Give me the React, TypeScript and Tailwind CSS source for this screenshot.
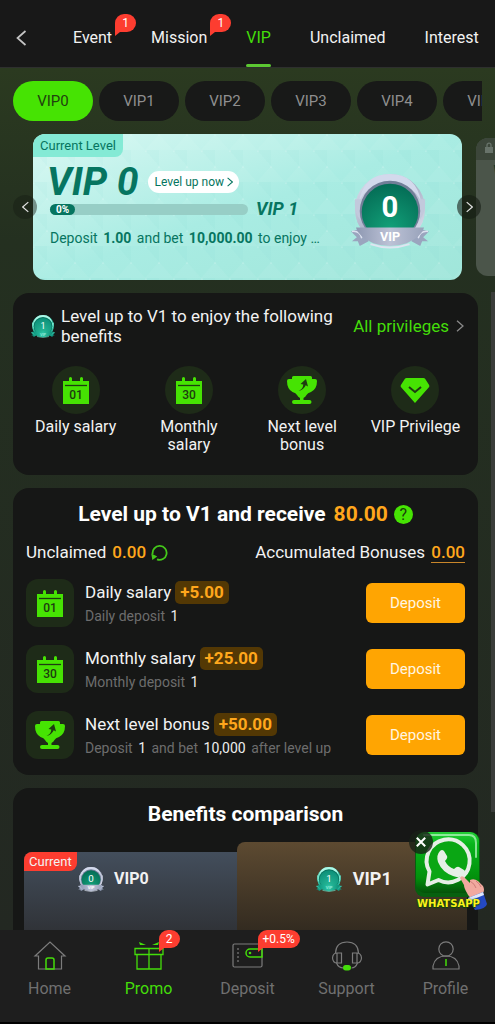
import React, { useState } from 'react';

const tabs = [
  { label: 'Event', badge: '1' },
  { label: 'Mission', badge: '1' },
  { label: 'VIP' },
  { label: 'Unclaimed' },
  { label: 'Interest' },
];

const levels = ['VIP0', 'VIP1', 'VIP2', 'VIP3', 'VIP4', 'VIP5'];

const App: React.FC = () => {
  const [activeTab, setActiveTab] = useState('VIP');
  const [level, setLevel] = useState('VIP0');
  const [showChat, setShowChat] = useState(true);

  return (
    <div className="relative h-screen flex flex-col overflow-hidden bg-[#232822] font-['Roboto',sans-serif] text-[#f2f2f2]">
      {/* Top tabs */}
      <header className="h-[68px] shrink-0 flex bg-[#181818] border-b border-[#2e2f2e]">
        <button aria-label="Back" className="w-[73px] shrink-0 pl-4 pt-2">
          <Chevron className="w-[11px] h-4 text-[#c4c4c4] rotate-180" />
        </button>
        <nav className="flex gap-[39px]">
          {tabs.map(tab => (
            <button
              key={tab.label}
              onClick={() => setActiveTab(tab.label)}
              className={`relative pt-2 text-base ${activeTab === tab.label ? 'text-[#44dd0a]' : ''}`}
            >
              {tab.label}
              {tab.badge && <Bubble className="absolute top-[14px] left-full ml-[3px]">{tab.badge}</Bubble>}
              {activeTab === tab.label && <span className="absolute left-0 bottom-0 h-[3px] w-full rounded-full bg-[#5cc832]" />}
            </button>
          ))}
        </nav>
      </header>

      <main className="flex-1 min-h-0 overflow-y-auto [scrollbar-width:none]">
        <div className="flex flex-col gap-[13px] pt-[13px] bg-linear-to-b from-[#2b3a20] from-0% via-[#243020] via-20% to-[#232822]">
          {/* Level chips */}
          <div className="mx-[13px] flex gap-[6px] overflow-hidden">
            {levels.map(item => (
              <button
                key={item}
                onClick={() => setLevel(item)}
                className={`w-20 h-10 shrink-0 rounded-full text-[15px] ${level === item ? 'bg-[#46e303] text-[#21420f]' : 'bg-[#181918] text-[#8f8f8f]'}`}
              >
                {item}
              </button>
            ))}
          </div>

          <LevelCarousel />

          {/* Benefits */}
          <section className="ml-[13px] mr-[17px] rounded-2xl bg-[#161716] px-[6px] pt-[13px] pb-[21px]">
            <div className="flex items-center pl-[12px] pr-2">
              <Medal value="1" teal className="w-6 h-6 shrink-0" />
              <h2 className="flex-1 ml-[6px] text-[17px] leading-5">Level up to V1 to enjoy the following benefits</h2>
              <a href="#privileges" className="flex items-center gap-[7px] text-[17px] leading-5 text-[#44dd0a]">
                All privileges
                <Chevron className="w-2 h-3 text-[#8a8a8a]" />
              </a>
            </div>
            <ul className="mt-5 grid grid-cols-4">
              <Benefit label="Daily salary"><CalendarIcon day="01" /></Benefit>
              <Benefit label="Monthly salary"><CalendarIcon day="30" /></Benefit>
              <Benefit label="Next level bonus"><TrophyIcon /></Benefit>
              <Benefit label="VIP Privilege"><DiamondIcon /></Benefit>
            </ul>
          </section>

          {/* Rewards */}
          <section className="ml-[13px] mr-[17px] rounded-2xl bg-[#161716] px-[13px] pt-[14px] pb-4">
            <h2 className="flex items-center justify-center text-[21px] leading-6 font-bold text-white">
              Level up to V1 and receive
              <span className="ml-2 text-[#ffa71c]">80.00</span>
              <button aria-label="Help" className="ml-[6px] w-[19px] h-[19px] rounded-full bg-[#46e303] text-[#1a3d0a] text-base leading-[19px] font-normal">?</button>
            </h2>
            <div className="mt-4 flex items-start justify-between text-[17px] leading-5">
              <p className="flex items-center">
                Unclaimed <span className="ml-[6px] font-medium text-[#ffa71c]">0.00</span>
                <button aria-label="Refresh" className="ml-[5px]"><RefreshIcon /></button>
              </p>
              <p>
                Accumulated Bonuses <a href="#bonuses" className="ml-[2px] inline-block border-b font-medium border-[#c8862a] text-[#ffa71c]">0.00</a>
              </p>
            </div>
            <div className="mt-4 flex flex-col gap-[18px]">
              <Reward title="Daily salary" amount="+5.00" icon={<CalendarIcon day="01" />}>
                Daily deposit <b className="mx-[2px] font-normal text-[#ededed]">1</b>
              </Reward>
              <Reward title="Monthly salary" amount="+25.00" icon={<CalendarIcon day="30" />}>
                Monthly deposit <b className="mx-[2px] font-normal text-[#ededed]">1</b>
              </Reward>
              <Reward title="Next level bonus" amount="+50.00" icon={<TrophyIcon />}>
                Deposit <b className="mx-[2px] font-normal text-[#ededed]">1</b> and bet <b className="mx-[2px] font-normal text-[#ededed]">10,000</b> after level up
              </Reward>
            </div>
          </section>

          {/* Comparison */}
          <section className="ml-[13px] mr-[17px] rounded-t-2xl bg-[#161716] px-[11px] pt-[14px]">
            <h2 className="text-center text-[21px] leading-6 font-bold text-white">Benefits comparison</h2>
            <div className="mt-4 flex items-end">
              <div className="relative w-[48%] h-[78px] pt-[14px] rounded-tl-lg bg-linear-to-b from-[#434e5c] to-[#303338]">
                <span className="absolute top-0 left-0 h-[19px] px-[5px] rounded-tl-lg rounded-br-lg bg-[#fd3d30] text-[13px] leading-[19px]">Current</span>
                <div className="flex items-center justify-center gap-[10px] pr-[34px] text-base leading-6 font-bold">
                  <Medal value="0" className="w-[26px] h-[26px]" />
                  VIP0
                </div>
              </div>
              <div className="w-[52%] h-[88px] pt-6 pl-1 rounded-t-lg bg-linear-to-b from-[#5d4a31] to-[#332b20]">
                <div className="flex items-center justify-center gap-[11px] text-lg leading-6 font-bold">
                  <Medal value="1" teal className="w-[26px] h-[26px]" />
                  VIP1
                </div>
              </div>
            </div>
          </section>
        </div>
      </main>

      {/* scroll thumb */}
      <span className="absolute right-0 top-[292px] bottom-[212px] w-1 bg-[#3a3d3a]" />

      {showChat && (
        <div className="absolute right-2 bottom-[112px] w-[76px] h-[80px]">
          <a href="#whatsapp" aria-label="WhatsApp" className="block">
            <WhatsAppArt />
            <span className="absolute left-[6px] top-[66px] z-10 font-['DejaVu_Sans',sans-serif] text-[10px] leading-3 font-bold text-[#fdf21c] [text-shadow:0_0_2px_#0a5a08,0_1px_1px_#063d05]">WHATSAPP</span>
          </a>
          <button onClick={() => setShowChat(false)} aria-label="Close" className="absolute -left-[2px] -top-[2px] w-6 h-6 rounded-full bg-[#182016]/80 flex items-center justify-center">
            <svg viewBox="0 0 10 10" className="w-[10px] h-[10px]" stroke="#fff" strokeWidth="2">
              <path d="M0.8 0.8l8.4 8.4M9.2 0.8L0.8 9.2" />
            </svg>
          </button>
        </div>
      )}

      {/* Bottom bar */}
      <nav className="h-[94px] shrink-0 grid grid-cols-5 bg-[#1e1e1e] border-b-2 border-black text-[#707070]">
        <NavItem label="Home"><HomeIcon /></NavItem>
        <NavItem label="Promo" badge="2" active><GiftIcon /></NavItem>
        <NavItem label="Deposit" badge="+0.5%"><WalletIcon /></NavItem>
        <NavItem label="Support"><HeadsetIcon /></NavItem>
        <NavItem label="Profile"><ProfileIcon /></NavItem>
      </nav>
    </div>
  );
};

const LevelCarousel: React.FC = () => (
  <div className="relative">
    <div className="flex items-center gap-[14px] pl-[33px] overflow-hidden">
      <div className="relative w-[calc(100%-33px)] h-[146px] shrink-0 overflow-hidden rounded-xl bg-linear-to-br from-[#d9f8f3] via-[#a9ece3] to-[#a0e6da] text-[#067560]">
        <CardPattern />
        <span className="absolute left-0 top-0 h-[23px] px-[7px] rounded-br-lg bg-[#84ead5] text-[13px] leading-[23px]">Current Level</span>
        <div className="relative flex h-full pt-7 pl-[17px] pr-[33px]">
          <div className="flex-1 min-w-0">
            <div className="flex items-center">
              <h1 className="-ml-[3px] text-[39px] leading-10 font-bold italic">VIP 0</h1>
              <button className="ml-[10px] h-[22px] flex items-center gap-[3px] rounded-full bg-white px-[6px] text-[12px]">
                Level up now
                <Chevron className="w-[6px] h-[10px]" />
              </button>
            </div>
            <div className="flex items-center gap-2">
              <div className="w-[198px] h-[11px] rounded-full bg-[#97cec6]">
                <div className="w-[25px] h-[11px] rounded-full bg-[#067560] text-center text-[10px] leading-[11px] font-bold text-white">0%</div>
              </div>
              <span className="text-lg leading-[14px] font-bold italic">VIP 1</span>
            </div>
            <p className="mt-3 whitespace-nowrap text-sm leading-5">
              Deposit <b className="mx-[2px]">1.00</b> and bet <b className="mx-[2px]">10,000.00</b> to enjoy …
            </p>
          </div>
          <Medal value="0" bold className="w-[78px] h-[78px] mt-[9px]" />
        </div>
      </div>
      <div className="w-[calc(100%-33px)] h-[138px] shrink-0 overflow-hidden rounded-xl bg-[#4b554a]">
        <div className="w-[91px] h-[22px] pl-2 pt-1 rounded-br-lg bg-[#3c463a]">
          <svg viewBox="0 0 10 12" className="w-[10px] h-3" fill="#68736a">
            <path d="M1 5h8v6H1z" />
            <path d="M3 5V3.2a2 2 0 0 1 4 0V5" fill="none" stroke="#68736a" strokeWidth="1.3" />
          </svg>
        </div>
        <div className="pl-[15px] text-[39px] leading-10 font-bold italic text-[#14382a]">VIP 1</div>
      </div>
    </div>
    <button aria-label="Previous level" className="absolute left-[13px] top-[61px] w-6 h-6 rounded-full bg-[#161c14]/45 flex items-center justify-center">
      <Chevron className="w-[7px] h-3 text-[#e4e4e4] rotate-180" />
    </button>
    <button aria-label="Next level" className="absolute right-[14px] top-[61px] w-6 h-6 rounded-full bg-[#161c14]/60 flex items-center justify-center">
      <Chevron className="w-[7px] h-3 text-[#e4e4e4]" />
    </button>
  </div>
);

const CardPattern = () => (
  <svg className="absolute inset-0 w-full h-full" aria-hidden="true">
    <defs>
      <pattern id="facets" width="28" height="32" patternUnits="userSpaceOnUse">
        <path d="M14 0L28 16H0z" fill="#fff" opacity="0.05" />
        <path d="M0 16h14v16z" fill="#5fd0bf" opacity="0.05" />
        <circle cx="14" cy="1" r="0.6" fill="#fff" opacity="0.5" />
        <circle cx="1" cy="17" r="0.6" fill="#fff" opacity="0.5" />
      </pattern>
    </defs>
    <rect width="100%" height="100%" fill="url(#facets)" />
  </svg>
);

const Benefit: React.FC<{ label: string; children: React.ReactNode }> = ({ label, children }) => (
  <li className="flex flex-col items-center">
    <span className="w-12 h-12 rounded-full bg-[#1e2b18] flex items-center justify-center">{children}</span>
    <span className="mt-1 max-w-24 text-center text-base leading-[18px]">{label}</span>
  </li>
);

const Reward: React.FC<{ title: string; amount: string; icon: React.ReactNode; children: React.ReactNode }> = ({ title, amount, icon, children }) => (
  <div className="flex items-center">
    <span className="w-12 h-12 shrink-0 rounded-xl bg-[#1e2b18] flex items-center justify-center">{icon}</span>
    <div className="flex-1 min-w-0 ml-[11px]">
      <h3 className="flex items-center gap-1 text-[17px] leading-6">
        {title}
        <span className="h-[23px] px-[5px] rounded-[5px] bg-[#533804] leading-[23px] font-bold text-[#ffa71c]">{amount}</span>
      </h3>
      <p className="mt-[2px] text-sm leading-5 text-[#6d6d6d]">{children}</p>
    </div>
    <button className="w-[99px] h-10 shrink-0 rounded-md bg-[#ffa502] text-[15px] text-[#fff6e2]">Deposit</button>
  </div>
);

const NavItem: React.FC<{ label: string; badge?: string; active?: boolean; children: React.ReactNode }> = ({ label, badge, active, children }) => (
  <a href={`#${label.toLowerCase()}`} className={`flex flex-col items-center pt-[9px] ${active ? 'text-[#44dd0a]' : ''}`}>
    <span className="relative">
      {children}
      {badge && <Bubble className="absolute -top-[9px] left-[27px]">{badge}</Bubble>}
    </span>
    <span className="mt-[6px] text-base leading-6">{label}</span>
  </a>
);

// Speech-bubble counter with its tail on the lower left
const Bubble: React.FC<{ className: string; children: React.ReactNode }> = ({ className, children }) => (
  <span className={`${className} h-[18px] min-w-[21px] px-[5px] rounded-full rounded-bl-none bg-[#fd3d30] text-center text-xs leading-[18px] text-white whitespace-nowrap`}>
    {children}
    <svg viewBox="0 0 5 4" className="absolute left-0 top-full w-[5px] h-1" fill="#fd3d30"><path d="M0 0h5L0 4z" /></svg>
  </span>
);

const Chevron: React.FC<{ className: string }> = ({ className }) => (
  <svg viewBox="0 0 10 16" className={className} fill="none" stroke="currentColor" strokeWidth="1.7">
    <path d="M1 1l8 7-8 7" />
  </svg>
);

const Medal: React.FC<{ value: string; teal?: boolean; bold?: boolean; className: string }> = ({ value, teal, bold, className }) => {
  const id = teal ? 'teal' : 'silver';
  return (
    <svg viewBox="0 0 80 80" className={className}>
      <defs>
        <linearGradient id={`rim-${id}`} x1="0" y1="0" x2="1" y2="1">
          <stop offset="0" stopColor={teal ? '#8ff5dd' : '#dfe3f2'} />
          <stop offset="0.5" stopColor={teal ? '#19a98d' : '#a9b0c6'} />
          <stop offset="1" stopColor={teal ? '#40c8ae' : '#e4e7f3'} />
        </linearGradient>
        <radialGradient id={`core-${id}`} cx="0.5" cy="0.8" r="0.8">
          <stop offset="0" stopColor={teal ? '#27b998' : '#12a179'} />
          <stop offset="1" stopColor={teal ? '#0c8f78' : '#046c55'} />
        </radialGradient>
        <linearGradient id={`band-${id}`} x1="0" y1="0" x2="1" y2="0">
          <stop offset="0" stopColor={teal ? '#0c927a' : '#8e98b2'} />
          <stop offset="0.5" stopColor={teal ? '#2cc4a5' : '#bcc2d6'} />
          <stop offset="1" stopColor={teal ? '#0b8a73' : '#98a2ba'} />
        </linearGradient>
      </defs>
      <path d="M5 29l4-2h62l4 2v14q0 10-7 17H12Q5 53 5 43z" fill={`url(#rim-${id})`} />
      <circle cx="40" cy="39" r="36" fill={`url(#rim-${id})`} />
      <path d="M8 32Q13 3 40 3t32 29q-9-20-32-20T8 32z" fill={teal ? '#adf8e8' : '#d3d9ec'} />
      <path d="M4 29h7q-4 9-1 22-7-8-6-22zM76 29h-7q4 9 1 22 7-8 6-22z" fill={teal ? '#77e6cf' : '#c2c9dc'} />
      <circle cx="40" cy="41" r="31" fill={teal ? '#08745f' : '#727e98'} />
      <circle cx="40" cy="42" r="29" fill={`url(#core-${id})`} />
      <path d="M0 62l10-3 8 13-9 5-2-5H1l5-4zM80 62l-10-3-8 13 9 5 2-5h6l-5-4z" fill={teal ? '#14a088' : '#9aa5be'} />
      <path d="M1 62q8-1 10 7M79 62q-8-1-10 7" fill="none" stroke={teal ? '#70e2ca' : '#dde2f0'} strokeWidth="1.5" />
      <path d="M5 58h70q-3 10-18 16-17 6-34 0Q8 68 5 58z" fill={`url(#band-${id})`} />
      <path d="M20 75q20 7 40 0" fill="none" stroke={teal ? '#71e2ca' : '#dfe4f1'} strokeWidth="2" />
      <text x="40" y={bold ? 47 : 50} textAnchor="middle" fontFamily="Roboto, sans-serif" fontWeight={bold ? 700 : 400} fontSize="30" fill="#fff">{value}</text>
      <text x="40" y="72" textAnchor="middle" fontFamily="Roboto, sans-serif" fontWeight="700" fontSize="13" fill={teal ? '#8eead6' : '#fff'}>VIP</text>
    </svg>
  );
};

const CalendarIcon: React.FC<{ day: string }> = ({ day }) => (
  <svg viewBox="0 0 28 28" className="w-7 h-7">
    <path d="M1 5h6V2.400a1.400 1.400 0 0 1 3 0V5h8V2.400a1.400 1.400 0 0 1 3 0V5h6v23H1z" fill="#46e303" />
    <path d="M3 9.500h22" stroke="#1e3b11" strokeWidth="1.300" />
    <text x="14" y="23" textAnchor="middle" fontFamily="Roboto, sans-serif" fontWeight="500" fontSize="12" fill="#1e3b11">{day}</text>
  </svg>
);

const TrophyIcon = () => (
  <svg viewBox="0 0 32 30" className="w-8 h-[30px]">
    <path d="M6 2.500Q6 1 7.500 1h17q1.500 0 1.500 1.500V4h3q2 0 2 2 0 8-6 11-3.500 1-4.500 3t-3 3v2h6q2 0 2 2t-2 2H8q-2 0-2-2t2-2h6v-2q-2-1-3-3T6.500 17Q1 14 1 6q0-2 2-2h3z" fill="#46e303" />
    <path d="M12.500 16q4.500-2 4.800-6.500l-2.800-.4 5.500-5 2 7.400-2.300-1.200q-2 4.700-7.200 5.700z" fill="#1e3b11" />
  </svg>
);

const DiamondIcon = () => (
  <svg viewBox="0 0 30 28" className="w-[30px] h-7">
    <path d="M6.500 2h17q1 0 1.600.8l4 6.200q.7 1.200-.2 2.200L15 27 1.100 11.200q-.900-1-.2-2.200l4-6.200Q5.500 2 6.500 2z" fill="#46e303" />
    <path d="M9 11l6 5 6-5" fill="none" stroke="#1e3b11" strokeWidth="2" />
  </svg>
);

const RefreshIcon = () => (
  <svg viewBox="0 0 17 17" className="block w-[17px] h-[17px]" fill="none" stroke="#44c81a" strokeWidth="1.800">
    <path d="M1.700 10A7 7 0 1 1 6 15.400" />
    <path d="M0.300 9.500l1 6.500 5-3.600z" fill="#44c81a" stroke="none" />
  </svg>
);

const HomeIcon = () => (
  <svg viewBox="0 0 34 32" className="w-[34px] h-8" fill="none" stroke="#7c7c7c" strokeWidth="1.200">
    <path d="M5.500 17H2L17 3l15 14h-3.500v13h-23z" />
    <path d="M13 30V21q0-2 2-2h4q2 0 2 2v9z" stroke="#44dd0a" strokeWidth="1.500" />
  </svg>
);

const GiftIcon = () => (
  <svg viewBox="0 0 34 32" className="w-[34px] h-8" fill="none" stroke="#44dd0a" strokeWidth="1.300">
    <path d="M3 9.500h28v6H3zM5 15.500h24V30H5zM17 9.500V30" />
    <path d="M7 3l7 3H8zM27 3l-7 3h6z" fill="#44dd0a" stroke="none" />
  </svg>
);

const WalletIcon = () => (
  <svg viewBox="0 0 34 32" className="w-[34px] h-8" fill="none" stroke="#7c7c7c" strokeWidth="1.200">
    <path d="M3.500 5h26q1.500 0 1.500 1.500v20q0 1.500-1.500 1.500h-26Q2 28 2 26.500v-20Q2 5 3.500 5z" />
    <path d="M7 9v16" strokeDasharray="2 2" />
    <path d="M31 10H19a4 4 0 0 0 0 8h12z" stroke="#44dd0a" strokeWidth="1.500" />
    <circle cx="19" cy="14" r="1.300" fill="#44dd0a" stroke="none" />
  </svg>
);

const HeadsetIcon = () => (
  <svg viewBox="0 0 34 32" className="w-[34px] h-8" fill="none" stroke="#7c7c7c" strokeWidth="1.200">
    <path d="M5.500 14Q6 3 17 3t11.500 11M6.500 24q2 5 7 5M27.500 24q-2 5-6 5" />
    <path d="M7 14h4.500v10H7q-4 0-4.500-5 .5-5 4.500-5zM27 14h-4.500v10H27q4 0 4.500-5-.5-5-4.500-5zM7 14v10M27 14v10" />
    <rect x="13" y="26" width="8" height="5.500" rx="2.700" fill="#44dd0a" stroke="none" />
  </svg>
);

const ProfileIcon = () => (
  <svg viewBox="0 0 34 32" className="w-[34px] h-8" fill="none" stroke="#7c7c7c" strokeWidth="1.200">
    <circle cx="17" cy="10" r="7.200" />
    <path d="M4 30v-3q2-10 13-10t13 10v3z" />
    <path d="M17 20v7" stroke="#44dd0a" strokeWidth="1.500" />
  </svg>
);

const WhatsAppArt = () => (
  <svg viewBox="0 0 76 80" className="w-[76px] h-[80px]">
    <defs>
      <linearGradient id="tile" x1="0" y1="0" x2="0" y2="1">
        <stop offset="0" stopColor="#24cf37" />
        <stop offset="0.200" stopColor="#07b51b" />
        <stop offset="0.750" stopColor="#02900c" />
        <stop offset="1" stopColor="#04520a" />
      </linearGradient>
    </defs>
    <rect x="4" y="0" width="65" height="65" rx="9" fill="#07600f" />
    <rect x="5" y="0" width="63" height="61" rx="9" fill="url(#tile)" />
    <path d="M13 3h45q7 0 7 8v14" fill="none" stroke="#bdf8c7" strokeWidth="2" strokeLinecap="round" opacity="0.700" />
    <path d="M18.500 39.500A21.500 21.500 0 1 1 27.500 48L16.500 52.500z" fill="#0aa614" stroke="#e6efe6" strokeWidth="4" strokeLinejoin="round" />
    <path d="M29 19q2-2 4 0l3 5q1 2-2 5 3 6 9 8 3-3 5-2l5 3q2 1 0 4-4 5-11 2-11-4-15-14-2-7 2-11z" fill="#e6efe6" />
    <path d="M49 46q1-3 4-1l6 6v-3q4-2 8 1l5 5q2 4 0 7l-9 6q-5-1-7-6-3-5-3-8z" fill="#f1a99f" />
    <path d="M59 49q5 3 6 7M65 49q4 3 5 6" fill="none" stroke="#cf7c78" />
    <path d="M57 66l15-6 4 12q-1 5-12 6z" fill="#2449c4" />
    <path d="M57 66l15-6 1 3-15 6z" fill="#dfe6fb" />
  </svg>
);

export default App;
